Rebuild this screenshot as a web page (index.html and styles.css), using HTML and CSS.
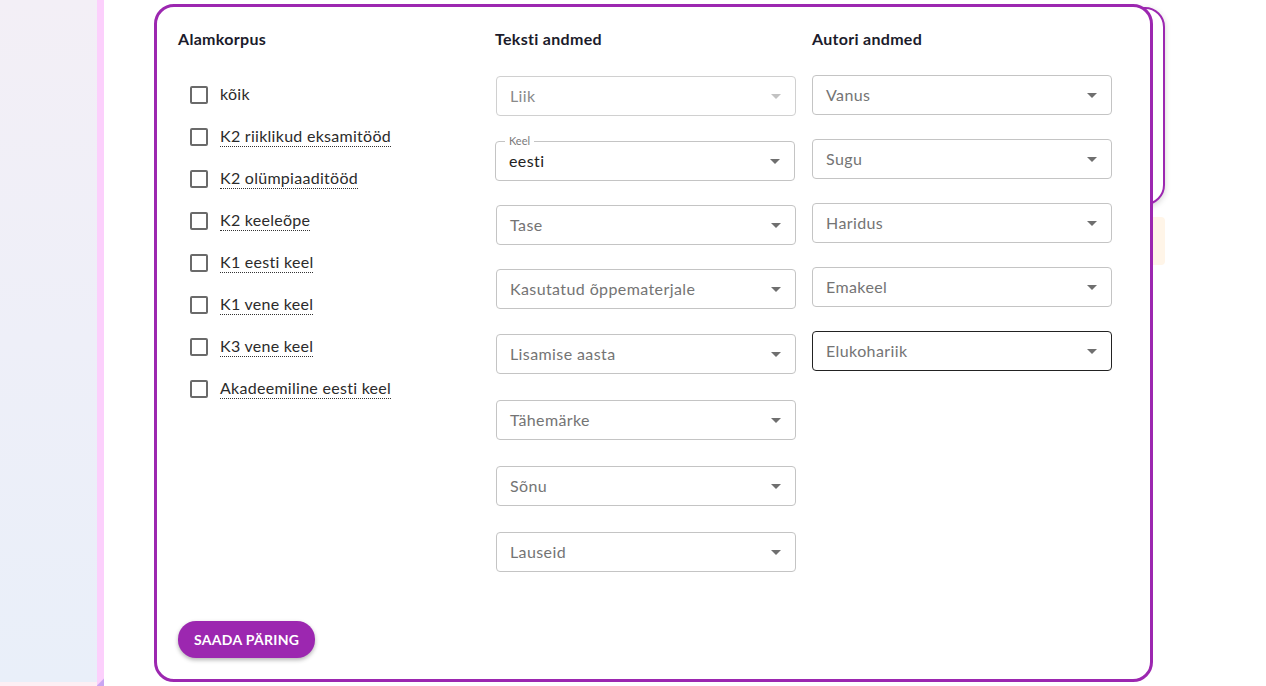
FILE: index.html
```html
<!DOCTYPE html>
<html lang="et">
<head>
<meta charset="utf-8">
<title>Päring</title>
<link rel="stylesheet" href="styles.css">
</head>
<body>
<div class="page">
  <aside class="sidebar">
    <div class="sidebar-bg"></div>
    <div class="sidebar-strip"></div>
    <div class="sidebar-bottom"></div>
    <div class="sidebar-corner"></div>
  </aside>
  <main class="main">
    <div class="back-card"></div>
    <div class="beige-note"></div>
    <section class="card">
      <div class="columns">
        <div class="col">
          <h3 class="col-title">Alamkorpus</h3>
          <ul class="checks">
            <li class="check"><span class="box"></span><span class="label plain">kõik</span></li>
            <li class="check"><span class="box"></span><span class="label">K2 riiklikud eksamitööd</span></li>
            <li class="check"><span class="box"></span><span class="label">K2 olümpiaaditööd</span></li>
            <li class="check"><span class="box"></span><span class="label">K2 keeleõpe</span></li>
            <li class="check"><span class="box"></span><span class="label">K1 eesti keel</span></li>
            <li class="check"><span class="box"></span><span class="label">K1 vene keel</span></li>
            <li class="check"><span class="box"></span><span class="label">K3 vene keel</span></li>
            <li class="check"><span class="box"></span><span class="label">Akadeemiline eesti keel</span></li>
          </ul>
        </div>
        <div class="col">
          <h3 class="col-title">Teksti andmed</h3>
          <div class="selects text-selects">
            <div class="select disabled"><span class="ph">Liik</span><span class="arrow"></span></div>
            <div class="select filled g1"><span class="float-label">Keel</span><span class="val">eesti</span><span class="arrow"></span></div>
            <div class="select"><span class="ph">Tase</span><span class="arrow"></span></div>
            <div class="select"><span class="ph">Kasutatud õppematerjale</span><span class="arrow"></span></div>
            <div class="select g1"><span class="ph">Lisamise aasta</span><span class="arrow"></span></div>
            <div class="select g2"><span class="ph">Tähemärke</span><span class="arrow"></span></div>
            <div class="select g2"><span class="ph">Sõnu</span><span class="arrow"></span></div>
            <div class="select g2"><span class="ph">Lauseid</span><span class="arrow"></span></div>
          </div>
        </div>
        <div class="col">
          <h3 class="col-title">Autori andmed</h3>
          <div class="selects author-selects">
            <div class="select"><span class="ph">Vanus</span><span class="arrow"></span></div>
            <div class="select"><span class="ph">Sugu</span><span class="arrow"></span></div>
            <div class="select"><span class="ph">Haridus</span><span class="arrow"></span></div>
            <div class="select"><span class="ph">Emakeel</span><span class="arrow"></span></div>
            <div class="select hover"><span class="ph">Elukohariik</span><span class="arrow"></span></div>
          </div>
        </div>
      </div>
      <button class="submit">SAADA PÄRING</button>
    </section>
  </main>
</div>
</body>
</html>
```

FILE: styles.css
```css
* { box-sizing: border-box; }
html, body { margin: 0; padding: 0; }
body {
  width: 1266px;
  height: 686px;
  overflow: hidden;
  background: #ffffff;
  font-family: "Lato", "Open Sans", sans-serif;
  color: #222;
}
.page {
  display: flex;
  height: 686px;
}
.sidebar {
  position: relative;
  width: 104px;
  flex: none;
  height: 686px;
}
.sidebar-bg {
  position: absolute;
  left: 0; top: 0;
  width: 97px; height: 682px;
  background: linear-gradient(180deg, #f3eff6 0%, #eeeff8 50%, #e9eff9 100%);
}
.sidebar-strip {
  position: absolute;
  left: 97px; top: 0;
  width: 7px; height: 678px;
  background: #fcd0fc;
}
.sidebar-bottom {
  position: absolute;
  left: 0; top: 682px;
  width: 97px; height: 4px;
  background: #fdeff4;
}
.sidebar-corner {
  position: absolute;
  left: 97px; top: 678px;
  width: 7px; height: 8px;
  background: linear-gradient(135deg, #fcd0fc 45%, #c9a6f2 55%);
}
.main {
  position: relative;
  flex: 1;
  height: 686px;
  padding: 4px 0 0 50px;
}
.back-card {
  position: absolute;
  left: 300px; top: 7px;
  width: 761px; height: 198px;
  border: 2px solid #9c27b0;
  border-radius: 20px;
  background: #fff;
  box-shadow: 0 2px 6px rgba(0,0,0,0.18);
}
.beige-note {
  position: absolute;
  left: 1040px; top: 217px;
  width: 21px; height: 48px;
  background: #fff5e8;
  border-radius: 4px;
}
.card {
  position: relative;
  width: 999px;
  height: 678px;
  border: 3px solid #9c27b0;
  border-radius: 20px;
  background: #fff;
  padding: 20px 38px 21px 21px;
  display: flex;
  flex-direction: column;
}
.columns {
  display: grid;
  grid-template-columns: 317px 317px 300px;
  align-items: start;
}
.col-title {
  margin: 0;
  font-size: 16px;
  line-height: 24px;
  font-weight: 700;
  letter-spacing: 0.3px;
  color: #1b1b2b;
}
.checks {
  list-style: none;
  margin: 22px 0 0 0;
  padding: 0 0 0 12px;
}
.check {
  display: flex;
  align-items: center;
  height: 42px;
}
.box {
  width: 18px; height: 18px;
  border: 2px solid #6a6a6a;
  border-radius: 2px;
  margin-right: 12px;
  flex: none;
  position: relative;
  top: 1px;
}
.label {
  font-size: 16px;
  line-height: 20px;
  letter-spacing: 0.28px;
  color: #2b2b2b;
  border-bottom: 1px dotted #333;
}
.label.plain { border-bottom: none; }
.selects {
  display: flex;
  flex-direction: column;
}
.text-selects { margin-top: 25px; gap: 24px; padding-left: 1px; }
.author-selects { margin-top: 24px; gap: 24px; }
.g1 { margin-top: 1px; }
.g2 { margin-top: 2px; }
.select {
  position: relative;
  width: 300px;
  height: 40px;
  border: 1px solid #c4c4c4;
  border-radius: 4px;
  display: flex;
  align-items: center;
  padding: 0 13px 1px 13px;
}
.select .ph {
  font-size: 16px;
  letter-spacing: 0.4px;
  color: #747474;
}
.select.disabled { border-color: #d0d0d0; }
.select.disabled .ph { color: #8a8a8a; }
.select.disabled .arrow { border-top-color: #c2c2c2; }
.select.hover { border-color: #222; }
.select.filled { margin-left: -1px; }
.val { font-size: 16px; letter-spacing: 0.4px; color: #222; }
.float-label {
  position: absolute;
  left: 9px; top: -8px;
  font-size: 11px;
  line-height: 14px;
  padding: 0 4px;
  background: #fff;
  color: #7a7a7a;
}
.arrow {
  position: absolute;
  right: 14px;
  top: 50%;
  margin-top: -2px;
  width: 0; height: 0;
  border-left: 5px solid transparent;
  border-right: 5px solid transparent;
  border-top: 5px solid #6f6f6f;
}
.submit {
  margin-top: auto;
  align-self: flex-start;
  height: 37px;
  padding: 0 16px;
  border: none;
  border-radius: 18px;
  background: #9c27b0;
  color: #fff;
  font-family: inherit;
  font-size: 14px;
  font-weight: 700;
  letter-spacing: 0.3px;
  box-shadow: 0 2px 4px rgba(0,0,0,0.3);
}
```
